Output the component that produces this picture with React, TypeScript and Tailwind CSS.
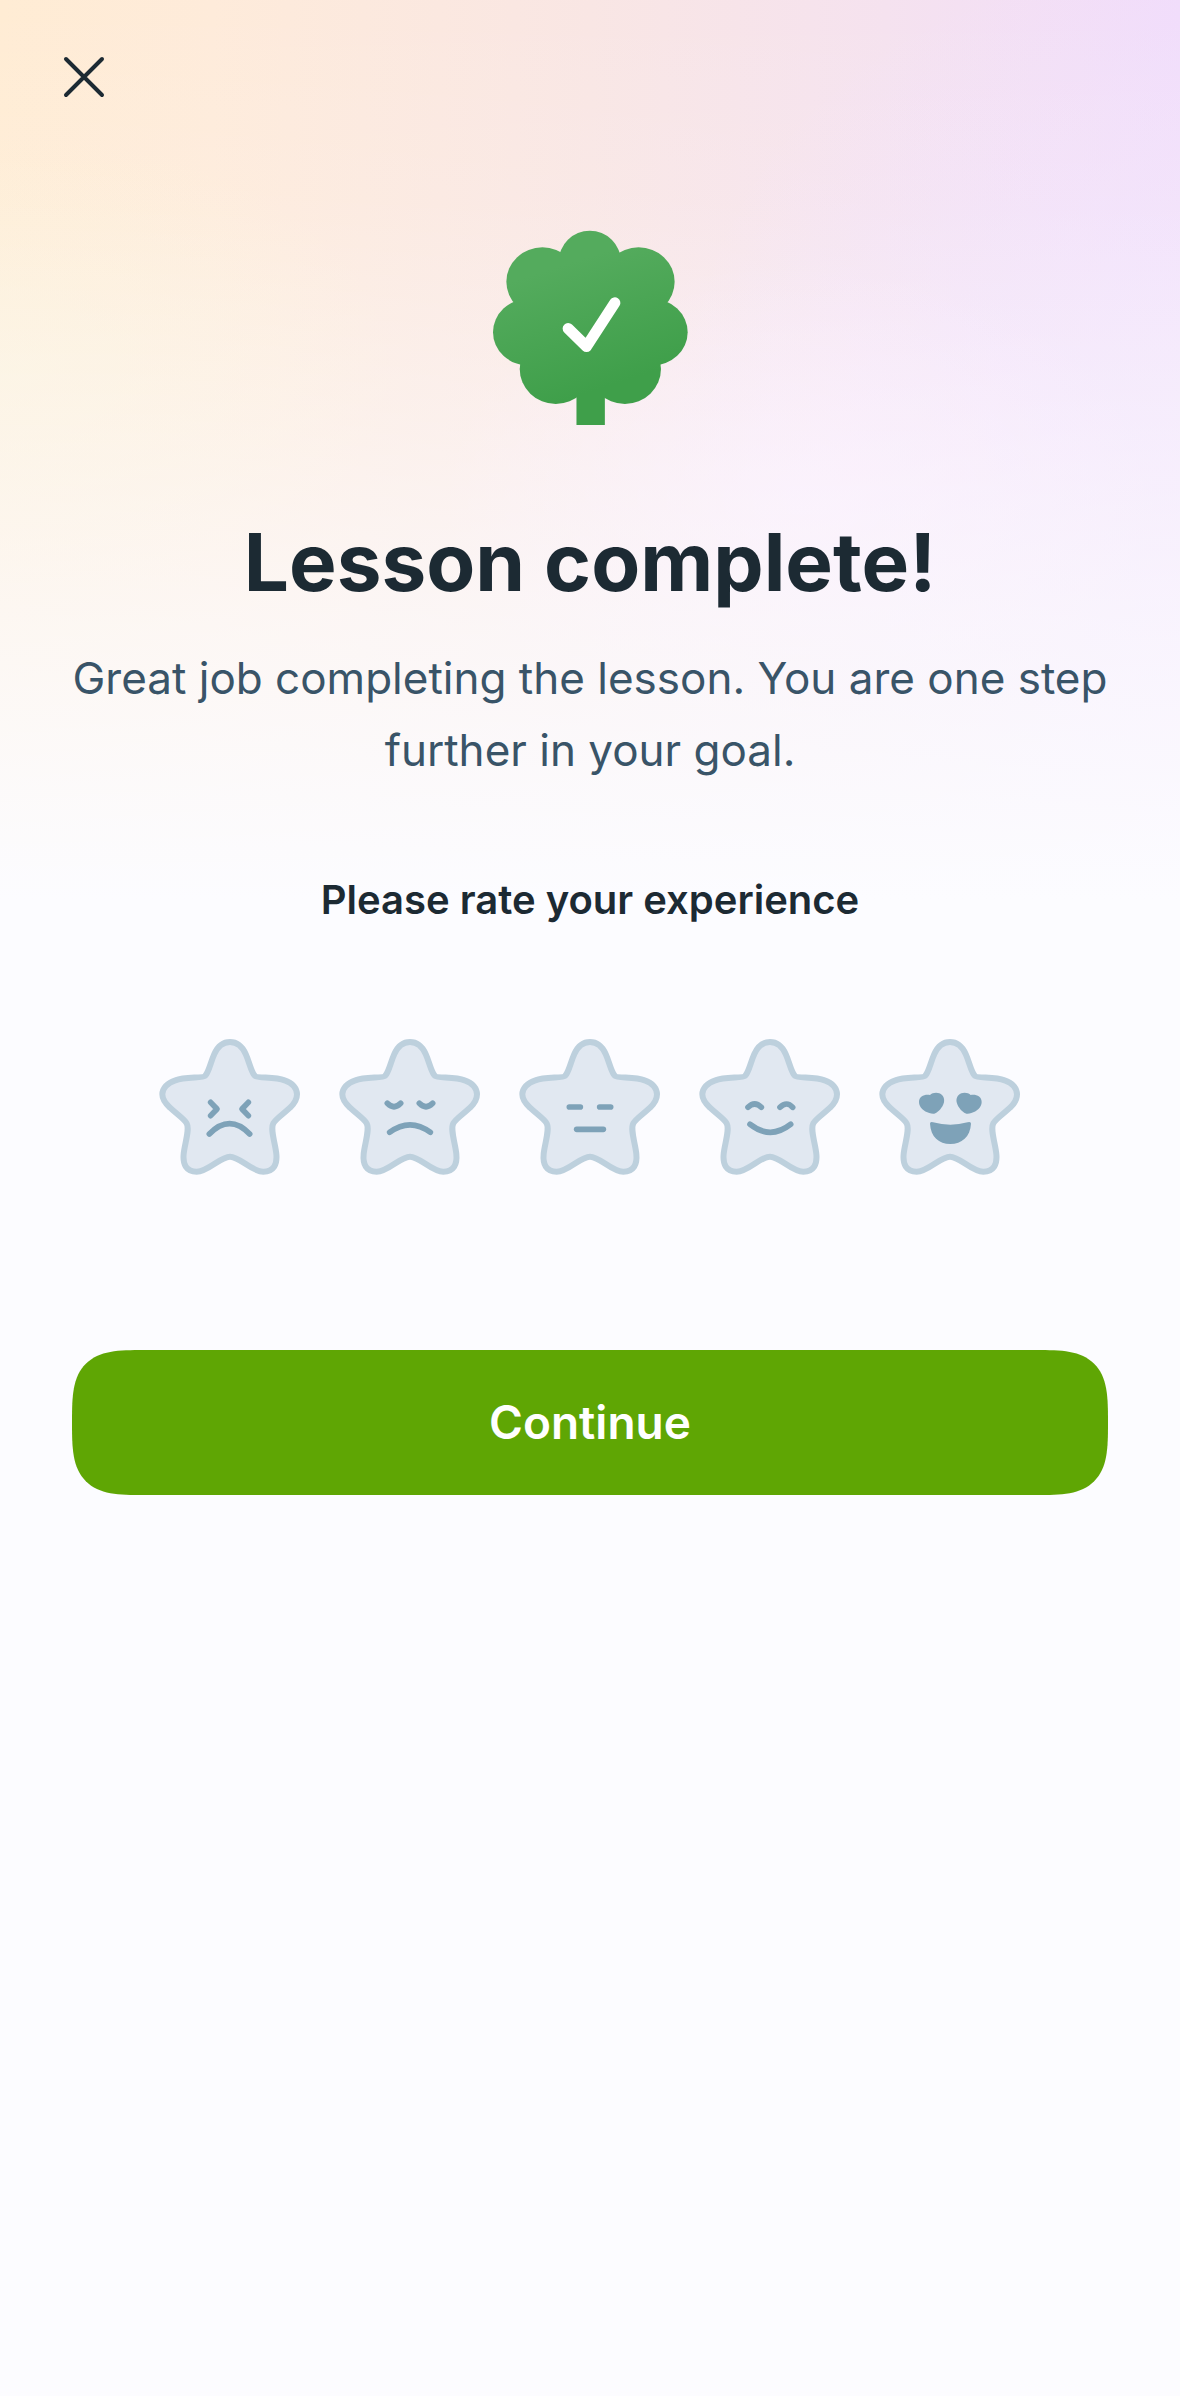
import { useState } from 'react';

const STAR_PATH =
  'M240 36C264 36 278 52 287 72C299 98 303 126 315 138C322 145 374 140 404 151C428 158 441 176 441 193C441 212 430 224 420 233C400 252 378 266 370 280C360 298 376 340 379 372C382 402 372 425 340 425C305 425 270 380 240 380C210 380 175 425 140 425C108 425 98 402 101 372C104 340 120 298 110 280C102 266 80 252 60 233C50 224 37 212 37 193C37 176 52 158 76 151C106 140 158 145 165 138C177 126 181 98 193 72C202 52 216 36 240 36Z';

const HEART_PATH =
  'M180 195C186 188 200 187 208 190C221 195 224 207 222 217C218 234 204 246 196 250C190 253 184 251 178 249C162 245 147 232 147 216C147 199 164 192 180 195Z';

const ratings = [
  {
    value: 1,
    label: 'Terrible',
    face: (
      <>
        <path d="M182 217L201 237L182 257" />
        <path d="M295 217L276 237L295 257" />
        <path d="M178 312Q239 250 299 312" />
      </>
    ),
  },
  {
    value: 2,
    label: 'Bad',
    face: (
      <>
        <path d="M172 220Q192 240 212 220" />
        <path d="M268 220Q288 240 308 220" />
        <path d="M179 307Q240 262 301 307" />
      </>
    ),
  },
  {
    value: 3,
    label: 'Okay',
    face: (
      <>
        <path d="M178 231H211" />
        <path d="M269 231H302" />
        <path d="M200 298H280" />
      </>
    ),
  },
  {
    value: 4,
    label: 'Good',
    face: (
      <>
        <path d="M174 232Q194 212 214 232" />
        <path d="M270 232Q290 212 308 232" />
        <path d="M180 283Q241 331 302 283" />
      </>
    ),
  },
  {
    value: 5,
    label: 'Amazing',
    face: (
      <g fill="#7ea2b8" stroke="none">
        <path d={HEART_PATH} />
        <path d={HEART_PATH} transform="translate(482 0) scale(-1 1)" />
        <path d="M180 281Q180 274 189 277Q241 291 293 277Q303 274 303 281C301 320 275 342 241 342S182 320 180 281Z" />
      </g>
    ),
  },
];

function TreeBadge() {
  return (
    <svg viewBox="40 46 584 584" className="mx-auto mt-[134px] size-[195px]" aria-hidden="true">
      <defs>
        <linearGradient id="tree" gradientUnits="userSpaceOnUse" x1="250" y1="100" x2="400" y2="560">
          <stop offset="0.1" stopColor="#54ab5d" />
          <stop offset="0.9" stopColor="#3f9f4a" />
        </linearGradient>
      </defs>
      <g fill="url(#tree)">
        <ellipse cx="330" cy="140" rx="93" ry="92" />
        <ellipse cx="188" cy="201" rx="108" ry="103" />
        <ellipse cx="476" cy="201" rx="108" ry="103" />
        <ellipse cx="147" cy="352" rx="107" ry="100" />
        <ellipse cx="516" cy="352" rx="107" ry="100" />
        <ellipse cx="228" cy="462" rx="108" ry="105" />
        <ellipse cx="435" cy="462" rx="108" ry="105" />
        <path d="M200 170H460V480H375V630H290V480H200Z" />
      </g>
      <path
        d="M265 341L320 395L405 264"
        fill="none"
        stroke="#fff"
        strokeWidth="33"
        strokeLinecap="round"
        strokeLinejoin="round"
      />
    </svg>
  );
}

export default function App() {
  const [rating, setRating] = useState<number | null>(null);

  return (
    <div className="min-h-screen bg-[#fcfcff] bg-[linear-gradient(to_bottom,#fcfcff00_0px,#fcfcff1a_200px,#fcfcff66_420px,#fcfcffb3_620px,#fcfcff_900px),radial-gradient(360px_240px_at_68%_500px,#fbeaffb3_0%,#fbeaff00_100%),radial-gradient(500px_450px_at_100%_400px,#f2e3fb_0%,#f2e3fb00_100%),radial-gradient(400px_240px_at_0%_370px,#fbf3dcb3_0%,#fbf3dc00_100%),linear-gradient(to_right,#ffecd4_0%,#feebda_18%,#f9e6e4_50%,#f5e2ef_75%,#f1dcfb_100%)] font-['Inter',sans-serif] text-[#1c2a33]">
      <header className="flex px-16 pt-14">
        <button type="button" aria-label="Close" className="size-10">
          <svg
            viewBox="0 0 40 40"
            className="overflow-visible"
            fill="none"
            stroke="currentColor"
            strokeWidth="4"
            strokeLinecap="round"
          >
            <path d="M2 3L38 39M38 3L2 39" />
          </svg>
        </button>
      </header>

      <main className="flex flex-col px-[72px] text-center">
        <TreeBadge />
        <h1 className="mt-[89px] text-[80px] leading-[96px] font-bold">Lesson complete!</h1>
        <p className="-mx-2 mt-8 text-[44px] leading-[72px] text-[#395468]">
          Great job completing the lesson. You are one step further in your goal.
        </p>

        <fieldset className="mt-[86px]">
          <legend className="w-full text-[40px] leading-[56px] font-semibold">
            Please rate your experience
          </legend>
          <div className="mt-[102px] flex justify-center gap-5">
            {ratings.map((item) => (
              <label key={item.value} className="relative cursor-pointer">
                <input
                  type="radio"
                  name="rating"
                  value={item.value}
                  checked={rating === item.value}
                  onChange={() => setRating(item.value)}
                  aria-label={item.label}
                  className="peer sr-only"
                />
                <svg
                  viewBox="0 0 480 480"
                  className="size-40 fill-[#e1e8f1] peer-checked:fill-[#ffe9a8]"
                  aria-hidden="true"
                >
                  <path d={STAR_PATH} stroke="#bdd0dd" strokeWidth="18" />
                  <g fill="none" stroke="#7ea2b8" strokeWidth="17" strokeLinecap="round" strokeLinejoin="round">
                    {item.face}
                  </g>
                </svg>
              </label>
            ))}
          </div>
        </fieldset>

        <button
          type="button"
          className="mt-40 h-[145px] rounded-[72px] bg-[#5fa604] text-[46px] font-semibold text-white [corner-shape:superellipse(1.7)]"
        >
          Continue
        </button>
      </main>
    </div>
  );
}
